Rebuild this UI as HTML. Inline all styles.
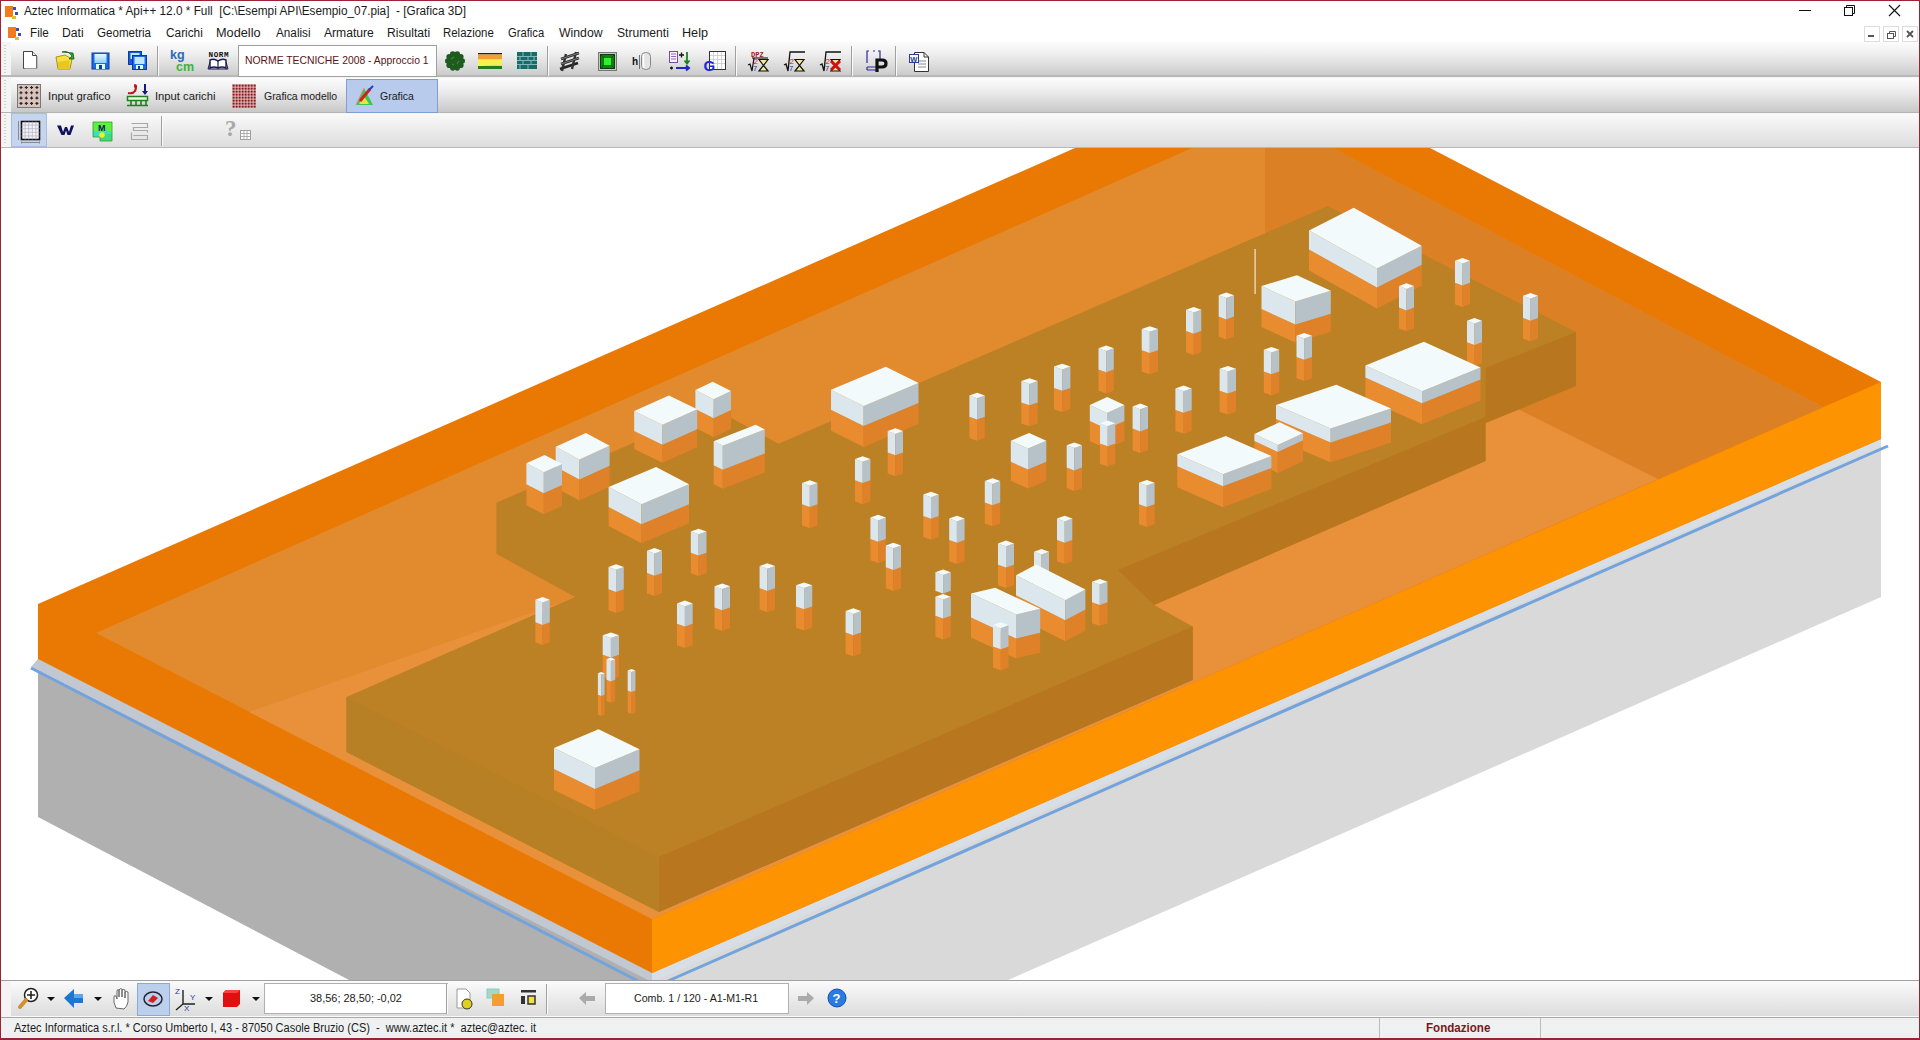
<!DOCTYPE html>
<html><head><meta charset="utf-8">
<style>
html,body{margin:0;padding:0;}
body{width:1920px;height:1040px;overflow:hidden;position:relative;background:#fff;font-family:"Liberation Sans", sans-serif;}
.t{position:absolute;font-size:12px;color:#1a1a1a;white-space:nowrap;line-height:14px;}
.ic{position:absolute;overflow:visible;}
.tb{position:absolute;left:0;width:1920px;background:linear-gradient(#fcfcfc 0%,#f0f0f0 30%,#d6d6d6 75%,#c6c6c6 100%);}
.tb3{background:linear-gradient(#fbfbfb 0%,#eeeeee 40%,#dcdcdc 100%) !important;}
.box{position:absolute;background:#fff;border:1px solid #a8a8a8;}
#scene{position:absolute;left:0;top:0;width:1920px;height:1040px;}
</style></head><body>
<svg id="scene" viewBox="0 0 1920 1040">
<polygon points="38.0,659.0 652.0,973.0 652.0,981.0 351.0,981.0 38.0,817.0" fill="#b0b0b0"/>
<polygon points="652.0,973.0 1881.0,439.0 1881.0,597.0 1006.0,981.0 652.0,981.0" fill="#d9d9d9"/>
<polygon points="38.0,659.0 652.0,973.0 652.0,982.0 31.0,667.0" fill="#c2c8d2"/>
<polygon points="652.0,973.0 1881.0,439.0 1881.0,446.0 652.0,982.0" fill="#d8dee6"/>
<polyline points="31.0,668.0 640.0,982.0" stroke="#72a3dc" stroke-width="3" fill="none"/>
<polyline points="652.0,988.0 1888.0,446.0" stroke="#72a3dc" stroke-width="3" fill="none"/>
<polygon points="38.0,604.0 1075.0,148.0 1430.0,148.0 1881.0,382.0 1881.0,439.0 652.0,973.0 38.0,659.0" fill="#ea7903"/>
<polygon points="652.0,919.0 1881.0,382.0 1881.0,439.0 652.0,973.0" fill="#fe9302"/>
<polygon points="96.0,633.0 1192.0,148.0 1333.0,148.0 1823.0,407.0 652.0,919.0" fill="#e28a2e"/>
<polygon points="249.0,712.0 575.0,597.5 1265.0,300.0 1520.0,410.0 1658.0,479.0 652.0,919.0" fill="#e8913a"/>
<polygon points="1265.0,148.0 1333.0,148.0 1823.0,407.0 1658.0,479.0 1520.0,410.0 1265.0,285.0" fill="#dc8026"/>
<polygon points="346.5,697.0 575.0,597.0 496.4,553.8 496.4,502.7 713.0,408.0 778.5,443.8 1328.0,206.0 1576.0,332.0 1576.0,386.0 1485.5,423.0 1485.5,461.0 1154.0,605.0 1192.7,626.4 1192.7,680.0 659.0,912.0 346.5,752.0" fill="#bc8124"/>
<polygon points="346.5,697.0 659.0,857.0 659.0,912.0 346.5,752.0" fill="#b88024"/>
<polygon points="659.0,857.0 1192.7,626.4 1192.7,680.0 659.0,912.0" fill="#b8761f"/>
<polygon points="1576.0,332.0 1576.0,386.0 1485.5,423.0 1485.5,368.0" fill="#b8761f"/>
<polygon points="1485.5,417.0 1485.5,461.0 1154.0,605.0 1118.0,570.0" fill="#b8761f"/>
<rect x="1254.5" y="249" width="1.2" height="45" fill="#f4e6d0"/>
<polygon points="1309.0,249.5 1377.0,287.5 1377.0,308.5 1309.0,270.5" fill="#e98b2f"/>
<polygon points="1377.0,287.5 1421.7,264.7 1421.7,285.7 1377.0,308.5" fill="#df8129"/>
<polygon points="1309.0,230.5 1377.0,268.5 1377.0,287.5 1309.0,249.5" fill="#dce7ed"/>
<polygon points="1377.0,268.5 1421.7,245.7 1421.7,264.7 1377.0,287.5" fill="#b6c2c8"/>
<polygon points="1309.0,230.5 1353.7,207.7 1421.7,245.7 1377.0,268.5" fill="#f3fafc"/>
<polygon points="1455.0,282.8 1462.5,285.6 1462.5,307.0 1455.0,304.2" fill="#e98b2f"/>
<polygon points="1462.5,285.6 1470.0,282.8 1470.0,304.2 1462.5,307.0" fill="#df8129"/>
<polygon points="1455.0,260.7 1462.5,263.5 1462.5,285.6 1455.0,282.8" fill="#dce7ed"/>
<polygon points="1462.5,263.5 1470.0,260.7 1470.0,282.8 1462.5,285.6" fill="#b6c2c8"/>
<polygon points="1455.0,260.7 1462.5,257.9 1470.0,260.7 1462.5,263.5" fill="#f3fafc"/>
<polygon points="1261.5,309.0 1295.4,324.5 1295.4,342.5 1261.5,327.0" fill="#e98b2f"/>
<polygon points="1295.4,324.5 1330.8,313.8 1330.8,331.8 1295.4,342.5" fill="#df8129"/>
<polygon points="1261.5,286.0 1295.4,301.5 1295.4,324.5 1261.5,309.0" fill="#dce7ed"/>
<polygon points="1295.4,301.5 1330.8,290.8 1330.8,313.8 1295.4,324.5" fill="#b6c2c8"/>
<polygon points="1261.5,286.0 1296.9,275.3 1330.8,290.8 1295.4,301.5" fill="#f3fafc"/>
<polygon points="1399.0,307.6 1406.5,310.4 1406.5,331.2 1399.0,328.4" fill="#e98b2f"/>
<polygon points="1406.5,310.4 1414.0,307.6 1414.0,328.4 1406.5,331.2" fill="#df8129"/>
<polygon points="1399.0,286.1 1406.5,288.9 1406.5,310.4 1399.0,307.6" fill="#dce7ed"/>
<polygon points="1406.5,288.9 1414.0,286.1 1414.0,307.6 1406.5,310.4" fill="#b6c2c8"/>
<polygon points="1399.0,286.1 1406.5,283.3 1414.0,286.1 1406.5,288.9" fill="#f3fafc"/>
<polygon points="1218.7,316.6 1226.3,319.4 1226.3,339.6 1218.7,336.8" fill="#e98b2f"/>
<polygon points="1226.3,319.4 1234.0,316.6 1234.0,336.8 1226.3,339.6" fill="#df8129"/>
<polygon points="1218.7,295.3 1226.3,298.1 1226.3,319.4 1218.7,316.6" fill="#dce7ed"/>
<polygon points="1226.3,298.1 1234.0,295.3 1234.0,316.6 1226.3,319.4" fill="#b6c2c8"/>
<polygon points="1218.7,295.3 1226.3,292.5 1234.0,295.3 1226.3,298.1" fill="#f3fafc"/>
<polygon points="1523.0,318.0 1530.5,320.8 1530.5,341.5 1523.0,338.7" fill="#e98b2f"/>
<polygon points="1530.5,320.8 1538.0,318.0 1538.0,338.7 1530.5,341.5" fill="#df8129"/>
<polygon points="1523.0,295.8 1530.5,298.6 1530.5,320.8 1523.0,318.0" fill="#dce7ed"/>
<polygon points="1530.5,298.6 1538.0,295.8 1538.0,318.0 1530.5,320.8" fill="#b6c2c8"/>
<polygon points="1523.0,295.8 1530.5,293.0 1538.0,295.8 1530.5,298.6" fill="#f3fafc"/>
<polygon points="1186.0,331.0 1193.7,333.8 1193.7,355.0 1186.0,352.2" fill="#e98b2f"/>
<polygon points="1193.7,333.8 1201.3,331.0 1201.3,352.2 1193.7,355.0" fill="#df8129"/>
<polygon points="1186.0,309.8 1193.7,312.6 1193.7,333.8 1186.0,331.0" fill="#dce7ed"/>
<polygon points="1193.7,312.6 1201.3,309.8 1201.3,331.0 1193.7,333.8" fill="#b6c2c8"/>
<polygon points="1186.0,309.8 1193.7,307.0 1201.3,309.8 1193.7,312.6" fill="#f3fafc"/>
<polygon points="1467.0,342.2 1474.5,345.0 1474.5,366.0 1467.0,363.2" fill="#e98b2f"/>
<polygon points="1474.5,345.0 1482.0,342.2 1482.0,363.2 1474.5,366.0" fill="#df8129"/>
<polygon points="1467.0,320.7 1474.5,323.5 1474.5,345.0 1467.0,342.2" fill="#dce7ed"/>
<polygon points="1474.5,323.5 1482.0,320.7 1482.0,342.2 1474.5,345.0" fill="#b6c2c8"/>
<polygon points="1467.0,320.7 1474.5,317.9 1482.0,320.7 1474.5,323.5" fill="#f3fafc"/>
<polygon points="1141.7,350.2 1149.8,353.0 1149.8,374.2 1141.7,371.4" fill="#e98b2f"/>
<polygon points="1149.8,353.0 1158.0,350.2 1158.0,371.4 1149.8,374.2" fill="#df8129"/>
<polygon points="1141.7,329.0 1149.8,331.8 1149.8,353.0 1141.7,350.2" fill="#dce7ed"/>
<polygon points="1149.8,331.8 1158.0,329.0 1158.0,350.2 1149.8,353.0" fill="#b6c2c8"/>
<polygon points="1141.7,329.0 1149.8,326.2 1158.0,329.0 1149.8,331.8" fill="#f3fafc"/>
<polygon points="1296.5,357.0 1304.2,359.8 1304.2,381.0 1296.5,378.2" fill="#e98b2f"/>
<polygon points="1304.2,359.8 1312.0,357.0 1312.0,378.2 1304.2,381.0" fill="#df8129"/>
<polygon points="1296.5,335.8 1304.2,338.6 1304.2,359.8 1296.5,357.0" fill="#dce7ed"/>
<polygon points="1304.2,338.6 1312.0,335.8 1312.0,357.0 1304.2,359.8" fill="#b6c2c8"/>
<polygon points="1296.5,335.8 1304.2,333.0 1312.0,335.8 1304.2,338.6" fill="#f3fafc"/>
<polygon points="1365.4,377.6 1422.0,403.2 1422.0,424.2 1365.4,398.6" fill="#e98b2f"/>
<polygon points="1422.0,403.2 1480.5,379.4 1480.5,400.4 1422.0,424.2" fill="#df8129"/>
<polygon points="1365.4,365.6 1422.0,391.2 1422.0,403.2 1365.4,377.6" fill="#dce7ed"/>
<polygon points="1422.0,391.2 1480.5,367.4 1480.5,379.4 1422.0,403.2" fill="#b6c2c8"/>
<polygon points="1365.4,365.6 1423.9,341.8 1480.5,367.4 1422.0,391.2" fill="#f3fafc"/>
<polygon points="1098.5,369.5 1106.2,372.3 1106.2,393.5 1098.5,390.7" fill="#e98b2f"/>
<polygon points="1106.2,372.3 1113.8,369.5 1113.8,390.7 1106.2,393.5" fill="#df8129"/>
<polygon points="1098.5,348.2 1106.2,351.0 1106.2,372.3 1098.5,369.5" fill="#dce7ed"/>
<polygon points="1106.2,351.0 1113.8,348.2 1113.8,369.5 1106.2,372.3" fill="#b6c2c8"/>
<polygon points="1098.5,348.2 1106.2,345.4 1113.8,348.2 1106.2,351.0" fill="#f3fafc"/>
<polygon points="1263.8,371.4 1271.5,374.2 1271.5,395.4 1263.8,392.6" fill="#e98b2f"/>
<polygon points="1271.5,374.2 1279.2,371.4 1279.2,392.6 1271.5,395.4" fill="#df8129"/>
<polygon points="1263.8,349.8 1271.5,352.6 1271.5,374.2 1263.8,371.4" fill="#dce7ed"/>
<polygon points="1271.5,352.6 1279.2,349.8 1279.2,371.4 1271.5,374.2" fill="#b6c2c8"/>
<polygon points="1263.8,349.8 1271.5,347.0 1279.2,349.8 1271.5,352.6" fill="#f3fafc"/>
<polygon points="1054.0,388.0 1062.2,390.8 1062.2,412.0 1054.0,409.2" fill="#e98b2f"/>
<polygon points="1062.2,390.8 1070.4,388.0 1070.4,409.2 1062.2,412.0" fill="#df8129"/>
<polygon points="1054.0,366.6 1062.2,369.4 1062.2,390.8 1054.0,388.0" fill="#dce7ed"/>
<polygon points="1062.2,369.4 1070.4,366.6 1070.4,388.0 1062.2,390.8" fill="#b6c2c8"/>
<polygon points="1054.0,366.6 1062.2,363.8 1070.4,366.6 1062.2,369.4" fill="#f3fafc"/>
<polygon points="1219.6,390.7 1227.8,393.5 1227.8,414.6 1219.6,411.8" fill="#e98b2f"/>
<polygon points="1227.8,393.5 1236.0,390.7 1236.0,411.8 1227.8,414.6" fill="#df8129"/>
<polygon points="1219.6,368.8 1227.8,371.6 1227.8,393.5 1219.6,390.7" fill="#dce7ed"/>
<polygon points="1227.8,371.6 1236.0,368.8 1236.0,390.7 1227.8,393.5" fill="#b6c2c8"/>
<polygon points="1219.6,368.8 1227.8,366.0 1236.0,368.8 1227.8,371.6" fill="#f3fafc"/>
<polygon points="831.0,409.8 863.7,426.0 863.7,447.0 831.0,430.8" fill="#e98b2f"/>
<polygon points="863.7,426.0 918.5,403.0 918.5,424.0 863.7,447.0" fill="#df8129"/>
<polygon points="831.0,389.8 863.7,406.0 863.7,426.0 831.0,409.8" fill="#dce7ed"/>
<polygon points="863.7,406.0 918.5,383.0 918.5,403.0 863.7,426.0" fill="#b6c2c8"/>
<polygon points="831.0,389.8 885.8,366.8 918.5,383.0 863.7,406.0" fill="#f3fafc"/>
<polygon points="1021.3,402.4 1029.5,405.2 1029.5,426.3 1021.3,423.5" fill="#e98b2f"/>
<polygon points="1029.5,405.2 1037.7,402.4 1037.7,423.5 1029.5,426.3" fill="#df8129"/>
<polygon points="1021.3,381.1 1029.5,383.9 1029.5,405.2 1021.3,402.4" fill="#dce7ed"/>
<polygon points="1029.5,383.9 1037.7,381.1 1037.7,402.4 1029.5,405.2" fill="#b6c2c8"/>
<polygon points="1021.3,381.1 1029.5,378.3 1037.7,381.1 1029.5,383.9" fill="#f3fafc"/>
<polygon points="695.4,409.0 713.7,418.2 713.7,437.2 695.4,428.0" fill="#e98b2f"/>
<polygon points="713.7,418.2 731.0,410.0 731.0,429.0 713.7,437.2" fill="#df8129"/>
<polygon points="695.4,390.0 713.7,399.2 713.7,418.2 695.4,409.0" fill="#dce7ed"/>
<polygon points="713.7,399.2 731.0,391.0 731.0,410.0 713.7,418.2" fill="#b6c2c8"/>
<polygon points="695.4,390.0 712.7,381.8 731.0,391.0 713.7,399.2" fill="#f3fafc"/>
<polygon points="1276.0,418.9 1330.7,442.6 1330.7,462.6 1276.0,438.9" fill="#e98b2f"/>
<polygon points="1330.7,442.6 1391.0,422.5 1391.0,442.5 1330.7,462.6" fill="#df8129"/>
<polygon points="1276.0,404.9 1330.7,428.6 1330.7,442.6 1276.0,418.9" fill="#dce7ed"/>
<polygon points="1330.7,428.6 1391.0,408.5 1391.0,422.5 1330.7,442.6" fill="#b6c2c8"/>
<polygon points="1276.0,404.9 1336.3,384.8 1391.0,408.5 1330.7,428.6" fill="#f3fafc"/>
<polygon points="1175.4,409.9 1183.6,412.7 1183.6,433.8 1175.4,431.0" fill="#e98b2f"/>
<polygon points="1183.6,412.7 1191.7,409.9 1191.7,431.0 1183.6,433.8" fill="#df8129"/>
<polygon points="1175.4,388.4 1183.6,391.2 1183.6,412.7 1175.4,409.9" fill="#dce7ed"/>
<polygon points="1183.6,391.2 1191.7,388.4 1191.7,409.9 1183.6,412.7" fill="#b6c2c8"/>
<polygon points="1175.4,388.4 1183.6,385.6 1191.7,388.4 1183.6,391.2" fill="#f3fafc"/>
<polygon points="969.4,416.8 977.1,419.6 977.1,440.8 969.4,438.0" fill="#e98b2f"/>
<polygon points="977.1,419.6 984.8,416.8 984.8,438.0 977.1,440.8" fill="#df8129"/>
<polygon points="969.4,395.5 977.1,398.3 977.1,419.6 969.4,416.8" fill="#dce7ed"/>
<polygon points="977.1,398.3 984.8,395.5 984.8,416.8 977.1,419.6" fill="#b6c2c8"/>
<polygon points="969.4,395.5 977.1,392.7 984.8,395.5 977.1,398.3" fill="#f3fafc"/>
<polygon points="634.2,431.0 662.5,444.8 662.5,462.8 634.2,449.0" fill="#e98b2f"/>
<polygon points="662.5,444.8 697.2,429.3 697.2,447.3 662.5,462.8" fill="#df8129"/>
<polygon points="634.2,411.0 662.5,424.8 662.5,444.8 634.2,431.0" fill="#dce7ed"/>
<polygon points="662.5,424.8 697.2,409.3 697.2,429.3 662.5,444.8" fill="#b6c2c8"/>
<polygon points="634.2,411.0 668.9,395.5 697.2,409.3 662.5,424.8" fill="#f3fafc"/>
<polygon points="1089.8,421.0 1107.0,429.0 1107.0,449.0 1089.8,441.0" fill="#e98b2f"/>
<polygon points="1107.0,429.0 1124.4,421.0 1124.4,441.0 1107.0,449.0" fill="#df8129"/>
<polygon points="1089.8,405.0 1107.0,413.0 1107.0,429.0 1089.8,421.0" fill="#dce7ed"/>
<polygon points="1107.0,413.0 1124.4,405.0 1124.4,421.0 1107.0,429.0" fill="#b6c2c8"/>
<polygon points="1089.8,405.0 1107.2,397.0 1124.4,405.0 1107.0,413.0" fill="#f3fafc"/>
<polygon points="1132.6,428.6 1140.3,431.4 1140.3,453.0 1132.6,450.2" fill="#e98b2f"/>
<polygon points="1140.3,431.4 1148.0,428.6 1148.0,450.2 1140.3,453.0" fill="#df8129"/>
<polygon points="1132.6,406.4 1140.3,409.2 1140.3,431.4 1132.6,428.6" fill="#dce7ed"/>
<polygon points="1140.3,409.2 1148.0,406.4 1148.0,428.6 1140.3,431.4" fill="#b6c2c8"/>
<polygon points="1132.6,406.4 1140.3,403.6 1148.0,406.4 1140.3,409.2" fill="#f3fafc"/>
<polygon points="1100.0,443.5 1107.7,446.3 1107.7,466.5 1100.0,463.7" fill="#e98b2f"/>
<polygon points="1107.7,446.3 1115.3,443.5 1115.3,463.7 1107.7,466.5" fill="#df8129"/>
<polygon points="1100.0,423.2 1107.7,426.0 1107.7,446.3 1100.0,443.5" fill="#dce7ed"/>
<polygon points="1107.7,426.0 1115.3,423.2 1115.3,443.5 1107.7,446.3" fill="#b6c2c8"/>
<polygon points="1100.0,423.2 1107.7,420.4 1115.3,423.2 1107.7,426.0" fill="#f3fafc"/>
<polygon points="1254.4,441.0 1277.8,452.0 1277.8,473.0 1254.4,462.0" fill="#e98b2f"/>
<polygon points="1277.8,452.0 1303.0,440.2 1303.0,461.2 1277.8,473.0" fill="#df8129"/>
<polygon points="1254.4,434.0 1277.8,445.0 1277.8,452.0 1254.4,441.0" fill="#dce7ed"/>
<polygon points="1277.8,445.0 1303.0,433.2 1303.0,440.2 1277.8,452.0" fill="#b6c2c8"/>
<polygon points="1254.4,434.0 1279.6,422.2 1303.0,433.2 1277.8,445.0" fill="#f3fafc"/>
<polygon points="713.7,465.2 722.8,469.8 722.8,488.8 713.7,484.2" fill="#e98b2f"/>
<polygon points="722.8,469.8 764.8,453.4 764.8,472.4 722.8,488.8" fill="#df8129"/>
<polygon points="713.7,441.2 722.8,445.8 722.8,469.8 713.7,465.2" fill="#dce7ed"/>
<polygon points="722.8,445.8 764.8,429.4 764.8,453.4 722.8,469.8" fill="#b6c2c8"/>
<polygon points="713.7,441.2 755.7,424.8 764.8,429.4 722.8,445.8" fill="#f3fafc"/>
<polygon points="887.7,452.4 895.4,455.2 895.4,476.3 887.7,473.5" fill="#e98b2f"/>
<polygon points="895.4,455.2 903.0,452.4 903.0,473.5 895.4,476.3" fill="#df8129"/>
<polygon points="887.7,431.1 895.4,433.9 895.4,455.2 887.7,452.4" fill="#dce7ed"/>
<polygon points="895.4,433.9 903.0,431.1 903.0,452.4 895.4,455.2" fill="#b6c2c8"/>
<polygon points="887.7,431.1 895.4,428.3 903.0,431.1 895.4,433.9" fill="#f3fafc"/>
<polygon points="555.7,466.7 579.4,479.5 579.4,500.5 555.7,487.7" fill="#e98b2f"/>
<polygon points="579.4,479.5 609.6,465.8 609.6,486.8 579.4,500.5" fill="#df8129"/>
<polygon points="555.7,446.7 579.4,459.5 579.4,479.5 555.7,466.7" fill="#dce7ed"/>
<polygon points="579.4,459.5 609.6,445.8 609.6,465.8 579.4,479.5" fill="#b6c2c8"/>
<polygon points="555.7,446.7 585.9,433.0 609.6,445.8 579.4,459.5" fill="#f3fafc"/>
<polygon points="1010.8,461.8 1028.0,469.5 1028.0,488.5 1010.8,480.8" fill="#e98b2f"/>
<polygon points="1028.0,469.5 1046.3,461.8 1046.3,480.8 1028.0,488.5" fill="#df8129"/>
<polygon points="1010.8,440.8 1028.0,448.5 1028.0,469.5 1010.8,461.8" fill="#dce7ed"/>
<polygon points="1028.0,448.5 1046.3,440.8 1046.3,461.8 1028.0,469.5" fill="#b6c2c8"/>
<polygon points="1010.8,440.8 1029.1,433.1 1046.3,440.8 1028.0,448.5" fill="#f3fafc"/>
<polygon points="1177.3,466.2 1223.0,486.3 1223.0,507.3 1177.3,487.2" fill="#e98b2f"/>
<polygon points="1223.0,486.3 1271.4,468.0 1271.4,489.0 1223.0,507.3" fill="#df8129"/>
<polygon points="1177.3,454.2 1223.0,474.3 1223.0,486.3 1177.3,466.2" fill="#dce7ed"/>
<polygon points="1223.0,474.3 1271.4,456.0 1271.4,468.0 1223.0,486.3" fill="#b6c2c8"/>
<polygon points="1177.3,454.2 1225.7,435.9 1271.4,456.0 1223.0,474.3" fill="#f3fafc"/>
<polygon points="1066.7,467.6 1074.3,470.4 1074.3,491.0 1066.7,488.2" fill="#e98b2f"/>
<polygon points="1074.3,470.4 1082.0,467.6 1082.0,488.2 1074.3,491.0" fill="#df8129"/>
<polygon points="1066.7,445.3 1074.3,448.1 1074.3,470.4 1066.7,467.6" fill="#dce7ed"/>
<polygon points="1074.3,448.1 1082.0,445.3 1082.0,467.6 1074.3,470.4" fill="#b6c2c8"/>
<polygon points="1066.7,445.3 1074.3,442.5 1082.0,445.3 1074.3,448.1" fill="#f3fafc"/>
<polygon points="526.4,484.2 543.8,493.3 543.8,514.3 526.4,505.2" fill="#e98b2f"/>
<polygon points="543.8,493.3 562.0,485.0 562.0,506.0 543.8,514.3" fill="#df8129"/>
<polygon points="526.4,463.2 543.8,472.3 543.8,493.3 526.4,484.2" fill="#dce7ed"/>
<polygon points="543.8,472.3 562.0,464.0 562.0,485.0 543.8,493.3" fill="#b6c2c8"/>
<polygon points="526.4,463.2 544.6,454.9 562.0,464.0 543.8,472.3" fill="#f3fafc"/>
<polygon points="855.0,480.2 862.7,483.0 862.7,504.2 855.0,501.4" fill="#e98b2f"/>
<polygon points="862.7,483.0 870.4,480.2 870.4,501.4 862.7,504.2" fill="#df8129"/>
<polygon points="855.0,459.0 862.7,461.8 862.7,483.0 855.0,480.2" fill="#dce7ed"/>
<polygon points="862.7,461.8 870.4,459.0 870.4,480.2 862.7,483.0" fill="#b6c2c8"/>
<polygon points="855.0,459.0 862.7,456.2 870.4,459.0 862.7,461.8" fill="#f3fafc"/>
<polygon points="608.6,507.0 641.5,524.3 641.5,543.3 608.6,526.0" fill="#e98b2f"/>
<polygon points="641.5,524.3 689.0,504.2 689.0,523.2 641.5,543.3" fill="#df8129"/>
<polygon points="608.6,487.0 641.5,504.3 641.5,524.3 608.6,507.0" fill="#dce7ed"/>
<polygon points="641.5,504.3 689.0,484.2 689.0,504.2 641.5,524.3" fill="#b6c2c8"/>
<polygon points="608.6,487.0 656.1,466.9 689.0,484.2 641.5,504.3" fill="#f3fafc"/>
<polygon points="984.8,502.4 992.5,505.2 992.5,526.3 984.8,523.5" fill="#e98b2f"/>
<polygon points="992.5,505.2 1000.2,502.4 1000.2,523.5 992.5,526.3" fill="#df8129"/>
<polygon points="984.8,481.1 992.5,483.9 992.5,505.2 984.8,502.4" fill="#dce7ed"/>
<polygon points="992.5,483.9 1000.2,481.1 1000.2,502.4 992.5,505.2" fill="#b6c2c8"/>
<polygon points="984.8,481.1 992.5,478.3 1000.2,481.1 992.5,483.9" fill="#f3fafc"/>
<polygon points="1139.0,504.2 1146.8,507.0 1146.8,527.0 1139.0,524.2" fill="#e98b2f"/>
<polygon points="1146.8,507.0 1154.6,504.2 1154.6,524.2 1146.8,527.0" fill="#df8129"/>
<polygon points="1139.0,482.8 1146.8,485.6 1146.8,507.0 1139.0,504.2" fill="#dce7ed"/>
<polygon points="1146.8,485.6 1154.6,482.8 1154.6,504.2 1146.8,507.0" fill="#b6c2c8"/>
<polygon points="1139.0,482.8 1146.8,480.0 1154.6,482.8 1146.8,485.6" fill="#f3fafc"/>
<polygon points="802.0,504.2 809.8,507.0 809.8,528.3 802.0,525.5" fill="#e98b2f"/>
<polygon points="809.8,507.0 817.5,504.2 817.5,525.5 809.8,528.3" fill="#df8129"/>
<polygon points="802.0,483.0 809.8,485.8 809.8,507.0 802.0,504.2" fill="#dce7ed"/>
<polygon points="809.8,485.8 817.5,483.0 817.5,504.2 809.8,507.0" fill="#b6c2c8"/>
<polygon points="802.0,483.0 809.8,480.2 817.5,483.0 809.8,485.8" fill="#f3fafc"/>
<polygon points="923.3,515.9 931.0,518.7 931.0,539.8 923.3,537.0" fill="#e98b2f"/>
<polygon points="931.0,518.7 938.7,515.9 938.7,537.0 931.0,539.8" fill="#df8129"/>
<polygon points="923.3,494.5 931.0,497.3 931.0,518.7 923.3,515.9" fill="#dce7ed"/>
<polygon points="931.0,497.3 938.7,494.5 938.7,515.9 931.0,518.7" fill="#b6c2c8"/>
<polygon points="923.3,494.5 931.0,491.7 938.7,494.5 931.0,497.3" fill="#f3fafc"/>
<polygon points="870.4,538.9 878.1,541.7 878.1,563.0 870.4,560.2" fill="#e98b2f"/>
<polygon points="878.1,541.7 885.8,538.9 885.8,560.2 878.1,563.0" fill="#df8129"/>
<polygon points="870.4,517.6 878.1,520.4 878.1,541.7 870.4,538.9" fill="#dce7ed"/>
<polygon points="878.1,520.4 885.8,517.6 885.8,538.9 878.1,541.7" fill="#b6c2c8"/>
<polygon points="870.4,517.6 878.1,514.8 885.8,517.6 878.1,520.4" fill="#f3fafc"/>
<polygon points="949.2,539.9 956.9,542.7 956.9,564.0 949.2,561.2" fill="#e98b2f"/>
<polygon points="956.9,542.7 964.6,539.9 964.6,561.2 956.9,564.0" fill="#df8129"/>
<polygon points="949.2,518.6 956.9,521.4 956.9,542.7 949.2,539.9" fill="#dce7ed"/>
<polygon points="956.9,521.4 964.6,518.6 964.6,539.9 956.9,542.7" fill="#b6c2c8"/>
<polygon points="949.2,518.6 956.9,515.8 964.6,518.6 956.9,521.4" fill="#f3fafc"/>
<polygon points="1057.0,539.9 1064.7,542.7 1064.7,564.0 1057.0,561.2" fill="#e98b2f"/>
<polygon points="1064.7,542.7 1072.3,539.9 1072.3,561.2 1064.7,564.0" fill="#df8129"/>
<polygon points="1057.0,518.6 1064.7,521.4 1064.7,542.7 1057.0,539.9" fill="#dce7ed"/>
<polygon points="1064.7,521.4 1072.3,518.6 1072.3,539.9 1064.7,542.7" fill="#b6c2c8"/>
<polygon points="1057.0,518.6 1064.7,515.8 1072.3,518.6 1064.7,521.4" fill="#f3fafc"/>
<polygon points="690.8,552.8 698.6,555.6 698.6,576.0 690.8,573.2" fill="#e98b2f"/>
<polygon points="698.6,555.6 706.5,552.8 706.5,573.2 698.6,576.0" fill="#df8129"/>
<polygon points="690.8,531.5 698.6,534.3 698.6,555.6 690.8,552.8" fill="#dce7ed"/>
<polygon points="698.6,534.3 706.5,531.5 706.5,552.8 698.6,555.6" fill="#b6c2c8"/>
<polygon points="690.8,531.5 698.6,528.7 706.5,531.5 698.6,534.3" fill="#f3fafc"/>
<polygon points="998.0,564.7 1006.0,567.5 1006.0,588.0 998.0,585.2" fill="#e98b2f"/>
<polygon points="1006.0,567.5 1014.0,564.7 1014.0,585.2 1006.0,588.0" fill="#df8129"/>
<polygon points="998.0,543.4 1006.0,546.2 1006.0,567.5 998.0,564.7" fill="#dce7ed"/>
<polygon points="1006.0,546.2 1014.0,543.4 1014.0,564.7 1006.0,567.5" fill="#b6c2c8"/>
<polygon points="998.0,543.4 1006.0,540.6 1014.0,543.4 1006.0,546.2" fill="#f3fafc"/>
<polygon points="885.8,567.2 893.4,570.0 893.4,591.0 885.8,588.2" fill="#e98b2f"/>
<polygon points="893.4,570.0 901.0,567.2 901.0,588.2 893.4,591.0" fill="#df8129"/>
<polygon points="885.8,545.5 893.4,548.3 893.4,570.0 885.8,567.2" fill="#dce7ed"/>
<polygon points="893.4,548.3 901.0,545.5 901.0,567.2 893.4,570.0" fill="#b6c2c8"/>
<polygon points="885.8,545.5 893.4,542.7 901.0,545.5 893.4,548.3" fill="#f3fafc"/>
<polygon points="647.0,573.0 654.5,575.8 654.5,596.0 647.0,593.2" fill="#e98b2f"/>
<polygon points="654.5,575.8 662.0,573.0 662.0,593.2 654.5,596.0" fill="#df8129"/>
<polygon points="647.0,550.8 654.5,553.6 654.5,575.8 647.0,573.0" fill="#dce7ed"/>
<polygon points="654.5,553.6 662.0,550.8 662.0,573.0 654.5,575.8" fill="#b6c2c8"/>
<polygon points="647.0,550.8 654.5,548.0 662.0,550.8 654.5,553.6" fill="#f3fafc"/>
<polygon points="1034.0,572.2 1041.5,575.0 1041.5,590.0 1034.0,587.2" fill="#e98b2f"/>
<polygon points="1041.5,575.0 1049.0,572.2 1049.0,587.2 1041.5,590.0" fill="#df8129"/>
<polygon points="1034.0,551.8 1041.5,554.6 1041.5,575.0 1034.0,572.2" fill="#dce7ed"/>
<polygon points="1041.5,554.6 1049.0,551.8 1049.0,572.2 1041.5,575.0" fill="#b6c2c8"/>
<polygon points="1034.0,551.8 1041.5,549.0 1049.0,551.8 1041.5,554.6" fill="#f3fafc"/>
<polygon points="759.6,588.2 767.3,591.0 767.3,612.2 759.6,609.4" fill="#e98b2f"/>
<polygon points="767.3,591.0 775.0,588.2 775.0,609.4 767.3,612.2" fill="#df8129"/>
<polygon points="759.6,566.0 767.3,568.8 767.3,591.0 759.6,588.2" fill="#dce7ed"/>
<polygon points="767.3,568.8 775.0,566.0 775.0,588.2 767.3,591.0" fill="#b6c2c8"/>
<polygon points="759.6,566.0 767.3,563.2 775.0,566.0 767.3,568.8" fill="#f3fafc"/>
<polygon points="608.5,589.2 616.1,592.0 616.1,613.0 608.5,610.2" fill="#e98b2f"/>
<polygon points="616.1,592.0 623.8,589.2 623.8,610.2 616.1,613.0" fill="#df8129"/>
<polygon points="608.5,567.0 616.1,569.8 616.1,592.0 608.5,589.2" fill="#dce7ed"/>
<polygon points="616.1,569.8 623.8,567.0 623.8,589.2 616.1,592.0" fill="#b6c2c8"/>
<polygon points="608.5,567.0 616.1,564.2 623.8,567.0 616.1,569.8" fill="#f3fafc"/>
<polygon points="1016.0,595.2 1065.2,620.2 1065.2,641.2 1016.0,616.2" fill="#e98b2f"/>
<polygon points="1065.2,620.2 1085.4,609.6 1085.4,630.6 1065.2,641.2" fill="#df8129"/>
<polygon points="1016.0,575.2 1065.2,600.2 1065.2,620.2 1016.0,595.2" fill="#dce7ed"/>
<polygon points="1065.2,600.2 1085.4,589.6 1085.4,609.6 1065.2,620.2" fill="#b6c2c8"/>
<polygon points="1016.0,575.2 1036.2,564.6 1085.4,589.6 1065.2,600.2" fill="#f3fafc"/>
<polygon points="935.4,590.7 943.1,593.5 943.1,594.0 935.4,591.2" fill="#e98b2f"/>
<polygon points="943.1,593.5 950.8,590.7 950.8,591.2 943.1,594.0" fill="#df8129"/>
<polygon points="935.4,572.2 943.1,575.0 943.1,593.5 935.4,590.7" fill="#dce7ed"/>
<polygon points="943.1,575.0 950.8,572.2 950.8,590.7 943.1,593.5" fill="#b6c2c8"/>
<polygon points="935.4,572.2 943.1,569.4 950.8,572.2 943.1,575.0" fill="#f3fafc"/>
<polygon points="1092.0,602.2 1099.8,605.0 1099.8,626.0 1092.0,623.2" fill="#e98b2f"/>
<polygon points="1099.8,605.0 1107.5,602.2 1107.5,623.2 1099.8,626.0" fill="#df8129"/>
<polygon points="1092.0,581.8 1099.8,584.6 1099.8,605.0 1092.0,602.2" fill="#dce7ed"/>
<polygon points="1099.8,584.6 1107.5,581.8 1107.5,602.2 1099.8,605.0" fill="#b6c2c8"/>
<polygon points="1092.0,581.8 1099.8,579.0 1107.5,581.8 1099.8,584.6" fill="#f3fafc"/>
<polygon points="796.0,606.5 804.1,609.3 804.1,630.5 796.0,627.7" fill="#e98b2f"/>
<polygon points="804.1,609.3 812.2,606.5 812.2,627.7 804.1,630.5" fill="#df8129"/>
<polygon points="796.0,585.2 804.1,588.0 804.1,609.3 796.0,606.5" fill="#dce7ed"/>
<polygon points="804.1,588.0 812.2,585.2 812.2,606.5 804.1,609.3" fill="#b6c2c8"/>
<polygon points="796.0,585.2 804.1,582.4 812.2,585.2 804.1,588.0" fill="#f3fafc"/>
<polygon points="714.5,607.5 722.2,610.3 722.2,631.0 714.5,628.2" fill="#e98b2f"/>
<polygon points="722.2,610.3 730.0,607.5 730.0,628.2 722.2,631.0" fill="#df8129"/>
<polygon points="714.5,586.2 722.2,589.0 722.2,610.3 714.5,607.5" fill="#dce7ed"/>
<polygon points="722.2,589.0 730.0,586.2 730.0,607.5 722.2,610.3" fill="#b6c2c8"/>
<polygon points="714.5,586.2 722.2,583.4 730.0,586.2 722.2,589.0" fill="#f3fafc"/>
<polygon points="971.0,617.5 1016.0,638.6 1016.0,658.6 971.0,637.5" fill="#e98b2f"/>
<polygon points="1016.0,638.6 1040.2,632.8 1040.2,652.8 1016.0,658.6" fill="#df8129"/>
<polygon points="971.0,593.5 1016.0,614.6 1016.0,638.6 971.0,617.5" fill="#dce7ed"/>
<polygon points="1016.0,614.6 1040.2,608.8 1040.2,632.8 1016.0,638.6" fill="#b6c2c8"/>
<polygon points="971.0,593.5 995.2,587.7 1040.2,608.8 1016.0,614.6" fill="#f3fafc"/>
<polygon points="935.4,615.7 943.1,618.5 943.1,639.6 935.4,636.8" fill="#e98b2f"/>
<polygon points="943.1,618.5 950.8,615.7 950.8,636.8 943.1,639.6" fill="#df8129"/>
<polygon points="935.4,596.8 943.1,599.6 943.1,618.5 935.4,615.7" fill="#dce7ed"/>
<polygon points="943.1,599.6 950.8,596.8 950.8,615.7 943.1,618.5" fill="#b6c2c8"/>
<polygon points="935.4,596.8 943.1,594.0 950.8,596.8 943.1,599.6" fill="#f3fafc"/>
<polygon points="535.4,622.2 542.6,625.0 542.6,645.0 535.4,642.2" fill="#e98b2f"/>
<polygon points="542.6,625.0 549.8,622.2 549.8,642.2 542.6,645.0" fill="#df8129"/>
<polygon points="535.4,599.8 542.6,602.6 542.6,625.0 535.4,622.2" fill="#dce7ed"/>
<polygon points="542.6,602.6 549.8,599.8 549.8,622.2 542.6,625.0" fill="#b6c2c8"/>
<polygon points="535.4,599.8 542.6,597.0 549.8,599.8 542.6,602.6" fill="#f3fafc"/>
<polygon points="677.0,623.8 684.9,626.6 684.9,648.0 677.0,645.2" fill="#e98b2f"/>
<polygon points="684.9,626.6 692.7,623.8 692.7,645.2 684.9,648.0" fill="#df8129"/>
<polygon points="677.0,603.4 684.9,606.2 684.9,626.6 677.0,623.8" fill="#dce7ed"/>
<polygon points="684.9,606.2 692.7,603.4 692.7,623.8 684.9,626.6" fill="#b6c2c8"/>
<polygon points="677.0,603.4 684.9,600.6 692.7,603.4 684.9,606.2" fill="#f3fafc"/>
<polygon points="845.6,632.4 853.3,635.2 853.3,656.3 845.6,653.5" fill="#e98b2f"/>
<polygon points="853.3,635.2 861.0,632.4 861.0,653.5 853.3,656.3" fill="#df8129"/>
<polygon points="845.6,611.1 853.3,613.9 853.3,635.2 845.6,632.4" fill="#dce7ed"/>
<polygon points="853.3,613.9 861.0,611.1 861.0,632.4 853.3,635.2" fill="#b6c2c8"/>
<polygon points="845.6,611.1 853.3,608.3 861.0,611.1 853.3,613.9" fill="#f3fafc"/>
<polygon points="993.0,646.4 1000.8,649.2 1000.8,670.4 993.0,667.6" fill="#e98b2f"/>
<polygon points="1000.8,649.2 1008.5,646.4 1008.5,667.6 1000.8,670.4" fill="#df8129"/>
<polygon points="993.0,625.1 1000.8,627.9 1000.8,649.2 993.0,646.4" fill="#dce7ed"/>
<polygon points="1000.8,627.9 1008.5,625.1 1008.5,646.4 1000.8,649.2" fill="#b6c2c8"/>
<polygon points="993.0,625.1 1000.8,622.3 1008.5,625.1 1000.8,627.9" fill="#f3fafc"/>
<polygon points="602.7,654.7 610.9,657.5 610.9,679.6 602.7,676.8" fill="#e98b2f"/>
<polygon points="610.9,657.5 619.0,654.7 619.0,676.8 610.9,679.6" fill="#df8129"/>
<polygon points="602.7,635.3 610.9,638.1 610.9,657.5 602.7,654.7" fill="#dce7ed"/>
<polygon points="610.9,638.1 619.0,635.3 619.0,654.7 610.9,657.5" fill="#b6c2c8"/>
<polygon points="602.7,635.3 610.9,632.5 619.0,635.3 610.9,638.1" fill="#f3fafc"/>
<polygon points="606.5,679.8 610.9,681.5 610.9,702.7 606.5,701.0" fill="#e98b2f"/>
<polygon points="610.9,681.5 615.2,679.8 615.2,701.0 610.9,702.7" fill="#df8129"/>
<polygon points="606.5,659.2 610.9,661.0 610.9,681.5 606.5,679.8" fill="#dce7ed"/>
<polygon points="610.9,661.0 615.2,659.2 615.2,679.8 610.9,681.5" fill="#b6c2c8"/>
<polygon points="606.5,659.2 610.9,657.5 615.2,659.2 610.9,661.0" fill="#f3fafc"/>
<polygon points="627.7,690.5 631.5,692.0 631.5,714.0 627.7,712.5" fill="#e98b2f"/>
<polygon points="631.5,692.0 635.4,690.5 635.4,712.5 631.5,714.0" fill="#df8129"/>
<polygon points="627.7,670.5 631.5,672.1 631.5,692.0 627.7,690.5" fill="#dce7ed"/>
<polygon points="631.5,672.1 635.4,670.5 635.4,690.5 631.5,692.0" fill="#b6c2c8"/>
<polygon points="627.7,670.5 631.5,669.0 635.4,670.5 631.5,672.1" fill="#f3fafc"/>
<polygon points="597.9,694.7 601.2,696.0 601.2,716.0 597.9,714.7" fill="#e98b2f"/>
<polygon points="601.2,696.0 604.6,694.7 604.6,714.7 601.2,716.0" fill="#df8129"/>
<polygon points="597.9,673.3 601.2,674.7 601.2,696.0 597.9,694.7" fill="#dce7ed"/>
<polygon points="601.2,674.7 604.6,673.3 604.6,694.7 601.2,696.0" fill="#b6c2c8"/>
<polygon points="597.9,673.3 601.2,672.0 604.6,673.3 601.2,674.7" fill="#f3fafc"/>
<polygon points="554.0,769.0 595.0,789.0 595.0,810.0 554.0,790.0" fill="#e98b2f"/>
<polygon points="595.0,789.0 639.5,770.3 639.5,791.3 595.0,810.0" fill="#df8129"/>
<polygon points="554.0,748.0 595.0,768.0 595.0,789.0 554.0,769.0" fill="#dce7ed"/>
<polygon points="595.0,768.0 639.5,749.3 639.5,770.3 595.0,789.0" fill="#b6c2c8"/>
<polygon points="554.0,748.0 598.5,729.3 639.5,749.3 595.0,768.0" fill="#f3fafc"/>
</svg>
<!-- title bar + menu -->
<div style="position:absolute;left:0;top:0;width:1920px;height:43px;background:#fff;"></div>
<div class="t" style="left:23.75px;top:5.44px;font-size:12px;line-height:12px;font-weight:normal;color:#1a1a1a;transform:scaleX(0.9819);transform-origin:0 0;">Aztec Informatica * Api++ 12.0 * Full&nbsp; [C:\Esempi API\Esempio_07.pia]&nbsp; - [Grafica 3D]</div>
<svg class="ic" style="left:5px;top:4px;width:16px;height:16px" viewBox="0 0 16 16"><rect x="0" y="2" width="8" height="11" fill="#f07c1c"/><rect x="8" y="3" width="3" height="3" fill="#3050c0"/><rect x="10" y="8" width="3" height="3" fill="#3050c0"/><rect x="7" y="12" width="4" height="3" fill="#d8c040"/></svg>
<svg class="ic" style="left:8px;top:25px;width:16px;height:16px" viewBox="0 0 16 16"><rect x="0" y="2" width="8" height="11" fill="#f07c1c"/><rect x="8" y="3" width="3" height="3" fill="#3050c0"/><rect x="10" y="8" width="3" height="3" fill="#3050c0"/><rect x="7" y="12" width="4" height="3" fill="#d8c040"/></svg>
<div style="position:absolute;left:1799px;top:10px;width:12px;height:1px;background:#111;"></div>
<svg class="ic" style="left:1843px;top:4px;width:14px;height:14px" viewBox="0 0 14 14"><rect x="1.5" y="3.5" width="8" height="8" fill="none" stroke="#111"/><path d="M3.5 3.5V1.5H11.5V9.5H9.5" fill="none" stroke="#111"/></svg>
<svg class="ic" style="left:1888px;top:4px;width:14px;height:14px" viewBox="0 0 14 14"><path d="M1 1L12 12M12 1L1 12" stroke="#111" stroke-width="1.1"/></svg>
<div class="t" style="left:29.67px;top:26.74px;font-size:12px;line-height:12px;font-weight:normal;color:#1a1a1a;transform:scaleX(0.9732);transform-origin:0 0;">File</div><div class="t" style="left:61.52px;top:26.74px;font-size:12px;line-height:12px;font-weight:normal;color:#1a1a1a;transform:scaleX(1.0163);transform-origin:0 0;">Dati</div><div class="t" style="left:96.92px;top:26.74px;font-size:12px;line-height:12px;font-weight:normal;color:#1a1a1a;transform:scaleX(0.9650);transform-origin:0 0;">Geometria</div><div class="t" style="left:166.41px;top:26.74px;font-size:12px;line-height:12px;font-weight:normal;color:#1a1a1a;transform:scaleX(0.9861);transform-origin:0 0;">Carichi</div><div class="t" style="left:216.48px;top:26.74px;font-size:12px;line-height:12px;font-weight:normal;color:#1a1a1a;transform:scaleX(1.0595);transform-origin:0 0;">Modello</div><div class="t" style="left:275.60px;top:26.74px;font-size:12px;line-height:12px;font-weight:normal;color:#1a1a1a;transform:scaleX(0.9780);transform-origin:0 0;">Analisi</div><div class="t" style="left:324.40px;top:26.74px;font-size:12px;line-height:12px;font-weight:normal;color:#1a1a1a;transform:scaleX(1.0104);transform-origin:0 0;">Armature</div><div class="t" style="left:387.03px;top:26.74px;font-size:12px;line-height:12px;font-weight:normal;color:#1a1a1a;transform:scaleX(1.0117);transform-origin:0 0;">Risultati</div><div class="t" style="left:443.49px;top:26.74px;font-size:12px;line-height:12px;font-weight:normal;color:#1a1a1a;transform:scaleX(0.9520);transform-origin:0 0;">Relazione</div><div class="t" style="left:508.19px;top:26.74px;font-size:12px;line-height:12px;font-weight:normal;color:#1a1a1a;transform:scaleX(0.9342);transform-origin:0 0;">Grafica</div><div class="t" style="left:559.40px;top:26.74px;font-size:12px;line-height:12px;font-weight:normal;color:#1a1a1a;transform:scaleX(1.0206);transform-origin:0 0;">Window</div><div class="t" style="left:616.89px;top:26.74px;font-size:12px;line-height:12px;font-weight:normal;color:#1a1a1a;transform:scaleX(1.0092);transform-origin:0 0;">Strumenti</div><div class="t" style="left:681.99px;top:26.74px;font-size:12px;line-height:12px;font-weight:normal;color:#1a1a1a;transform:scaleX(1.0524);transform-origin:0 0;">Help</div>
<div style="position:absolute;left:1864px;top:26px;width:16px;height:16px;border:1px solid #ddd;box-sizing:border-box;"></div>
<div style="position:absolute;left:1868px;top:35px;width:6px;height:2px;background:#555;"></div>
<div style="position:absolute;left:1883px;top:26px;width:16px;height:16px;border:1px solid #ddd;box-sizing:border-box;"></div>
<svg class="ic" style="left:1885px;top:28px;width:12px;height:12px" viewBox="0 0 12 12"><rect x="2.5" y="5.5" width="6" height="5" fill="none" stroke="#555"/><path d="M4.5 5.5V3.5H10.5V8.5H8.5" fill="none" stroke="#555"/></svg>
<div style="position:absolute;left:1902px;top:26px;width:16px;height:16px;border:1px solid #ddd;box-sizing:border-box;"></div>
<svg class="ic" style="left:1905px;top:29px;width:10px;height:10px" viewBox="0 0 10 10"><path d="M2 2L8 8M8 2L2 8" stroke="#555" stroke-width="1.8"/></svg>
<!-- toolbar rows -->
<div class="tb" style="top:42px;height:36px;"></div>
<div class="tb" style="top:78px;height:35px;"></div>
<div class="tb tb3" style="top:113px;height:35px;"></div>
<div style="position:absolute;left:0;top:42px;width:11px;height:106px;background:#f4f4f4;"></div>
<div style="position:absolute;left:0;top:147px;width:1920px;height:1px;background:#b8b8b8;"></div>
<div style="position:absolute;left:0;top:75px;width:1920px;height:2px;background:#b8b8b8;"></div><div style="position:absolute;left:0;top:77px;width:1920px;height:1px;background:#f4f4f4;"></div>
<div style="position:absolute;left:0;top:112px;width:1920px;height:1px;background:#b4b4b4;"></div><div style="position:absolute;left:0;top:113px;width:1920px;height:1px;background:#f6f6f6;"></div>
<div style="position:absolute;left:4px;top:45px;width:2px;height:29px;background:repeating-linear-gradient(#c8d8c8 0 1px,transparent 1px 3px);"></div>
<div style="position:absolute;left:4px;top:80px;width:2px;height:29px;background:repeating-linear-gradient(#c8d8c8 0 1px,transparent 1px 3px);"></div>
<div style="position:absolute;left:4px;top:115px;width:2px;height:29px;background:repeating-linear-gradient(#c8d8c8 0 1px,transparent 1px 3px);"></div>
<svg class="ic" style="left:21px;top:51px;width:18px;height:20px" viewBox="0 0 18 20"><path d="M2.5 0.5H11.5L15.5 4.5V17.5H2.5Z" fill="#fff" stroke="#444"/><path d="M11.5 0.5V4.5H15.5" fill="#eee" stroke="#444"/><path d="M3.5 17.5H16V5" stroke="#999" fill="none"/></svg>
<svg class="ic" style="left:55px;top:51px;width:20px;height:20px" viewBox="0 0 20 20"><path d="M1 6L10 4L17 8L15 18L3 18Z" fill="#f4e040" stroke="#b09020"/><path d="M3 11L14 9L15 18H3Z" fill="#e8c820"/><path d="M7 1Q13 -1 17 5L14 8L19 8L18 2Z" fill="#30a030" stroke="#106010" stroke-width="0.8"/></svg>
<svg class="ic" style="left:91px;top:52px;width:20px;height:19px" viewBox="0 0 20 19"><defs><linearGradient id="fg" x1="0" y1="0" x2="0" y2="1"><stop offset="0" stop-color="#e8f8ff"/><stop offset="1" stop-color="#8fd0f8"/></linearGradient></defs><rect x="0.5" y="0.5" width="18" height="17" fill="#0a3aa8"/><rect x="1.5" y="1.5" width="16" height="15" fill="#1e6ae0"/><rect x="3.5" y="2" width="12" height="9" fill="url(#fg)"/><rect x="5" y="12" width="9" height="5" fill="#dff"/><rect x="8" y="13" width="3" height="4" fill="#0a3aa8"/></svg>
<svg class="ic" style="left:128px;top:51px;width:20px;height:20px" viewBox="0 0 20 20"><rect x="0.5" y="0.5" width="13" height="13" fill="#1e5ad0" stroke="#0a3aa8"/><rect x="2.5" y="2" width="9" height="6" fill="#bfe8ff"/><rect x="4.5" y="4.5" width="14" height="14" fill="#1e6ae0" stroke="#0a3aa8"/><rect x="6.5" y="6" width="10" height="7" fill="#bfe8ff"/><rect x="8" y="14" width="7" height="4" fill="#dff"/><rect x="10" y="15" width="2" height="3" fill="#0a3aa8"/></svg>
<div style="position:absolute;left:157px;top:46px;width:1px;height:30px;background:#a0a0a0;"></div><div style="position:absolute;left:158px;top:46px;width:1px;height:30px;background:#fafafa;"></div>
<svg class="ic" style="left:168px;top:48px;width:30px;height:26px" viewBox="0 0 30 26"><text x="2" y="11" font-size="12.5" font-weight="bold" fill="#2a6ab8" font-family="Liberation Sans">kg</text><text x="8" y="22.5" font-size="12.5" font-weight="bold" fill="#3cb43c" font-family="Liberation Sans">cm</text></svg>
<svg class="ic" style="left:206px;top:49px;width:26px;height:22px" viewBox="0 0 26 22"><text x="2.5" y="7.5" font-size="7.6" font-weight="bold" fill="#111" font-family="Liberation Mono" textLength="20">NORM</text><path d="M4 19V11Q8 9 12 12Q16 9 20 11V19Q16 17 12 19Q8 17 4 19Z" fill="#fff" stroke="#1a1a50" stroke-width="1.4"/><path d="M12 12V19" stroke="#1a1a50" stroke-width="1.2"/><path d="M4 13L2 20H22L20 13" fill="none" stroke="#1a1a50" stroke-width="1"/></svg>
<div class="box" style="left:238px;top:45px;width:197px;height:30px;border-color:#a0a0a0;"></div>
<div class="t" style="left:245.27px;top:54.81px;font-size:10.5px;line-height:10.5px;font-weight:normal;color:#5a1414;transform:scaleX(0.9871);transform-origin:0 0;">NORME TECNICHE 2008 - Approccio 1</div>
<svg class="ic" style="left:445px;top:51px;width:20px;height:20px" viewBox="0 0 20 20"><circle cx="10" cy="10" r="8" fill="#1f5a1f"/><circle cx="17.20" cy="10.00" r="2.8" fill="#1f5a1f"/><circle cx="15.83" cy="14.23" r="2.8" fill="#1f5a1f"/><circle cx="12.23" cy="16.85" r="2.8" fill="#1f5a1f"/><circle cx="7.78" cy="16.85" r="2.8" fill="#1f5a1f"/><circle cx="4.18" cy="14.23" r="2.8" fill="#1f5a1f"/><circle cx="2.80" cy="10.00" r="2.8" fill="#1f5a1f"/><circle cx="4.17" cy="5.77" r="2.8" fill="#1f5a1f"/><circle cx="7.77" cy="3.15" r="2.8" fill="#1f5a1f"/><circle cx="12.22" cy="3.15" r="2.8" fill="#1f5a1f"/><circle cx="15.82" cy="5.77" r="2.8" fill="#1f5a1f"/><path d="M6 8L9 6M12 13L14 10M7 13L9 14" stroke="#3a8a3a" stroke-width="1.2"/></svg>
<svg class="ic" style="left:478px;top:53px;width:24px;height:17px" viewBox="0 0 24 17"><rect x="0" y="0" width="24" height="1.5" fill="#222"/><rect x="0" y="1.5" width="24" height="5" fill="#f0a030"/><path d="M0 6.5H24V12Q12 11 0 14Z" fill="#f6f050"/><path d="M0 14Q12 11 24 12V13H0Z" fill="#e8e050"/><rect x="0" y="13" width="24" height="3" fill="#2a7a20"/></svg>
<svg class="ic" style="left:517px;top:52px;width:20px;height:17px" viewBox="0 0 20 17"><rect x="0" y="0" width="20" height="17" fill="#1a6a6a"/><path d="M0 4.5H20M0 8.5H20M0 12.5H20M6 0V4.5M14 0V4.5M3 4.5V8.5M11 4.5V8.5M17 4.5V8.5M6 8.5V12.5M14 8.5V12.5M3 12.5V17M11 12.5V17" stroke="#80b8b8" stroke-width="1"/></svg>
<div style="position:absolute;left:547px;top:46px;width:1px;height:30px;background:#a0a0a0;"></div><div style="position:absolute;left:548px;top:46px;width:1px;height:30px;background:#fafafa;"></div>
<svg class="ic" style="left:558px;top:50px;width:24px;height:22px" viewBox="0 0 24 22"><path d="M3 9L21 3M3 14L21 8M2 19L20 13" stroke="#222" stroke-width="2.6" fill="none"/><path d="M8 4L4 21M18 2L14 19" stroke="#333" stroke-width="2.4" fill="none"/><path d="M3 9L21 3M3 14L21 8" stroke="#999" stroke-width="0.8" fill="none"/></svg>
<svg class="ic" style="left:598px;top:52px;width:20px;height:20px" viewBox="0 0 20 20"><rect x="0.5" y="0.5" width="18" height="18" fill="#c8c8c8" stroke="#777"/><rect x="2.5" y="2.5" width="14" height="14" fill="#108010" stroke="#0a400a"/><rect x="6" y="6" width="7" height="7" fill="#30f030"/><path d="M2.5 2.5L6 6M16.5 2.5L13 6M2.5 16.5L6 13M16.5 16.5L13 13" stroke="#0a500a"/></svg>
<svg class="ic" style="left:632px;top:51px;width:20px;height:20px" viewBox="0 0 20 20"><text x="0" y="14" font-size="10" font-weight="bold" fill="#111" font-family="Liberation Sans">h</text><path d="M7.5 4V18" stroke="#555" stroke-width="0.8"/><rect x="9.5" y="1.5" width="9" height="17" rx="4" fill="#e4e4e4" stroke="#888"/><path d="M11.5 3V17" stroke="#fff" stroke-width="1.5"/></svg>
<svg class="ic" style="left:668px;top:50px;width:24px;height:22px" viewBox="0 0 24 22"><rect x="1.5" y="1.5" width="8" height="11" fill="#f8f4ff" stroke="#7a48a8"/><path d="M3 4H8M3 6.5H8M3 9H8" stroke="#7a48a8" stroke-width="0.8"/><path d="M11 5H16M13.5 2.5V7.5" stroke="#111" stroke-width="1.3"/><path d="M19 2V13M16.5 10.5L19 13.5L21.5 10.5" stroke="#208020" stroke-width="1.8" fill="none"/><path d="M2 18H5M3.5 16.5V19.5" stroke="#111" stroke-width="1.3"/><path d="M8 18H21M18 15.5L21 18L18 20.5" stroke="#1a2ac0" stroke-width="2" fill="none"/></svg>
<svg class="ic" style="left:704px;top:50px;width:24px;height:23px" viewBox="0 0 24 23"><rect x="5.5" y="1.5" width="16" height="18" fill="#fff" stroke="#333"/><path d="M5.5 5.5H21.5M5.5 9.5H21.5M5.5 13.5H21.5M9.5 1.5V19.5M13.5 1.5V19.5M17.5 1.5V19.5" stroke="#c8c8d8" stroke-width="0.8"/><rect x="5.5" y="1.5" width="16" height="18" fill="none" stroke="#333"/><text x="-0.5" y="21" font-size="15" font-weight="bold" fill="#1a2ad8" font-family="Liberation Sans">G</text></svg>
<div style="position:absolute;left:735px;top:46px;width:1px;height:30px;background:#a0a0a0;"></div><div style="position:absolute;left:736px;top:46px;width:1px;height:30px;background:#fafafa;"></div>
<svg class="ic" style="left:747px;top:50px;width:23px;height:23px" viewBox="0 0 23 23"><text x="4" y="6.5" font-size="7" font-weight="bold" fill="#a01818" font-family="Liberation Mono">DPZ</text><path d="M5 8H21" stroke="#222" stroke-width="1.2"/><path d="M1 15L3 14L5 21L7 8" stroke="#111" stroke-width="1.2" fill="none"/><text x="6.5" y="14" font-size="8" fill="#d02020" font-family="Liberation Sans">2</text><text x="6" y="21" font-size="7.5" fill="#3030b0" font-family="Liberation Sans">7</text><path d="M12 9.5H21L16.5 15.5L21 21H12L16.5 15.5Z" fill="#f2ea90" stroke="#111" stroke-width="1.2"/></svg>
<svg class="ic" style="left:783px;top:50px;width:23px;height:23px" viewBox="0 0 23 23"><path d="M1 15L3 14L5 21L7 2H22" stroke="#111" stroke-width="1.3" fill="none"/><text x="6.5" y="14" font-size="8" fill="#d02020" font-family="Liberation Sans">2</text><text x="6" y="21" font-size="7.5" fill="#3030b0" font-family="Liberation Sans">7</text><path d="M12 9.5H21L16.5 15.5L21 21H12L16.5 15.5Z" fill="#f2ea90" stroke="#111" stroke-width="1.2"/></svg>
<svg class="ic" style="left:819px;top:50px;width:23px;height:23px" viewBox="0 0 23 23"><path d="M1 15L3 14L5 21L7 2H22" stroke="#111" stroke-width="1.3" fill="none"/><text x="6.5" y="14" font-size="8" fill="#d02020" font-family="Liberation Sans">2</text><text x="6" y="21" font-size="7.5" fill="#3030b0" font-family="Liberation Sans">7</text><path d="M12 9.5H21L16.5 15.5L21 21H12L16.5 15.5Z" fill="#f2ea90" stroke="#111" stroke-width="1.2"/><path d="M12 11L21 20M21 11L12 20" stroke="#d01010" stroke-width="3"/></svg>
<div style="position:absolute;left:851px;top:46px;width:1px;height:30px;background:#a0a0a0;"></div><div style="position:absolute;left:852px;top:46px;width:1px;height:30px;background:#fafafa;"></div>
<svg class="ic" style="left:864px;top:49px;width:24px;height:25px" viewBox="0 0 24 25"><path d="M5 2H3V14M9 2H11M14 2H16V12" stroke="#2a2aa0" stroke-width="1.2" fill="none"/><path d="M3 18H13M3 21H13M3 18V21" stroke="#2a2aa0" stroke-width="1.2" fill="none"/><path d="M13 23V11H18Q22 11 22 14.5Q22 18 18 18H13" stroke="#111" stroke-width="3.2" fill="none"/></svg>
<div style="position:absolute;left:895px;top:46px;width:1px;height:30px;background:#a0a0a0;"></div><div style="position:absolute;left:896px;top:46px;width:1px;height:30px;background:#fafafa;"></div>
<svg class="ic" style="left:908px;top:50px;width:22px;height:23px" viewBox="0 0 22 23"><path d="M6.5 2.5H16L20.5 7V21.5H6.5Z" fill="#fff" stroke="#333"/><path d="M16 2.5V7H20.5" fill="none" stroke="#333"/><path d="M10 11H18M10 14H18M10 17H18" stroke="#888"/><rect x="1" y="4" width="10" height="9" fill="#20409a"/><rect x="2" y="5" width="8" height="7" fill="#fff"/><text x="2.2" y="11.5" font-size="7.5" font-weight="bold" fill="#20409a" font-family="Liberation Sans">W</text></svg>
<svg class="ic" style="left:17px;top:84px;width:24px;height:24px" viewBox="0 0 24 24"><rect x="0.5" y="0.5" width="23" height="23" fill="#d8c4bc" stroke="#777"/><path d="M2.5 3.5H5.5M4.0 2.0V5.0" stroke="#222" stroke-width="1.1"/><path d="M2.5 8.8H5.5M4.0 7.3V10.3" stroke="#222" stroke-width="1.1"/><path d="M2.5 14.1H5.5M4.0 12.6V15.6" stroke="#222" stroke-width="1.1"/><path d="M2.5 19.4H5.5M4.0 17.9V20.9" stroke="#222" stroke-width="1.1"/><path d="M7.8 3.5H10.8M9.3 2.0V5.0" stroke="#222" stroke-width="1.1"/><path d="M7.8 8.8H10.8M9.3 7.3V10.3" stroke="#222" stroke-width="1.1"/><path d="M7.8 14.1H10.8M9.3 12.6V15.6" stroke="#222" stroke-width="1.1"/><path d="M7.8 19.4H10.8M9.3 17.9V20.9" stroke="#222" stroke-width="1.1"/><path d="M13.1 3.5H16.1M14.6 2.0V5.0" stroke="#222" stroke-width="1.1"/><path d="M13.1 8.8H16.1M14.6 7.3V10.3" stroke="#222" stroke-width="1.1"/><path d="M13.1 14.1H16.1M14.6 12.6V15.6" stroke="#222" stroke-width="1.1"/><path d="M13.1 19.4H16.1M14.6 17.9V20.9" stroke="#222" stroke-width="1.1"/><path d="M18.4 3.5H21.4M19.9 2.0V5.0" stroke="#222" stroke-width="1.1"/><path d="M18.4 8.8H21.4M19.9 7.3V10.3" stroke="#222" stroke-width="1.1"/><path d="M18.4 14.1H21.4M19.9 12.6V15.6" stroke="#222" stroke-width="1.1"/><path d="M18.4 19.4H21.4M19.9 17.9V20.9" stroke="#222" stroke-width="1.1"/></svg>
<div class="t" style="left:47.73px;top:91.07px;font-size:11.5px;line-height:11.5px;font-weight:normal;color:#1a1a1a;transform:scaleX(0.9867);transform-origin:0 0;">Input grafico</div>
<svg class="ic" style="left:125px;top:83px;width:25px;height:25px" viewBox="0 0 25 25"><path d="M10 2Q12 3 10 8Q8 11 3 10" stroke="#c01818" stroke-width="2.2" fill="none"/><path d="M9 1L12 2.5L9 5" fill="#c01818"/><path d="M20 1V10" stroke="#101a80" stroke-width="2"/><path d="M17 8L20 12L23 8Z" fill="#101a80"/><rect x="2.5" y="13.5" width="20" height="4" fill="#e8f8e8" stroke="#208020" stroke-width="1.5"/><path d="M6 17V22M11 17V22M16 17V22M21 17V22M2 22.5H23" stroke="#208020" stroke-width="1.6"/></svg>
<div class="t" style="left:155.24px;top:91.07px;font-size:11.5px;line-height:11.5px;font-weight:normal;color:#1a1a1a;transform:scaleX(0.9749);transform-origin:0 0;">Input carichi</div>
<svg class="ic" style="left:232px;top:84px;width:24px;height:24px" viewBox="0 0 24 24"><rect x="0" y="0" width="24" height="24" fill="#f0e0e0"/><rect x="0.5" y="0.5" width="2.2" height="2.2" fill="#8a1818"/><rect x="0.5" y="3.5" width="2.2" height="2.2" fill="#8a1818"/><rect x="0.5" y="6.5" width="2.2" height="2.2" fill="#8a1818"/><rect x="0.5" y="9.5" width="2.2" height="2.2" fill="#8a1818"/><rect x="0.5" y="12.5" width="2.2" height="2.2" fill="#8a1818"/><rect x="0.5" y="15.5" width="2.2" height="2.2" fill="#8a1818"/><rect x="0.5" y="18.5" width="2.2" height="2.2" fill="#8a1818"/><rect x="0.5" y="21.5" width="2.2" height="2.2" fill="#8a1818"/><rect x="3.5" y="0.5" width="2.2" height="2.2" fill="#8a1818"/><rect x="3.5" y="3.5" width="2.2" height="2.2" fill="#8a1818"/><rect x="3.5" y="6.5" width="2.2" height="2.2" fill="#8a1818"/><rect x="3.5" y="9.5" width="2.2" height="2.2" fill="#8a1818"/><rect x="3.5" y="12.5" width="2.2" height="2.2" fill="#8a1818"/><rect x="3.5" y="15.5" width="2.2" height="2.2" fill="#8a1818"/><rect x="3.5" y="18.5" width="2.2" height="2.2" fill="#8a1818"/><rect x="3.5" y="21.5" width="2.2" height="2.2" fill="#8a1818"/><rect x="6.5" y="0.5" width="2.2" height="2.2" fill="#8a1818"/><rect x="6.5" y="3.5" width="2.2" height="2.2" fill="#8a1818"/><rect x="6.5" y="6.5" width="2.2" height="2.2" fill="#8a1818"/><rect x="6.5" y="9.5" width="2.2" height="2.2" fill="#8a1818"/><rect x="6.5" y="12.5" width="2.2" height="2.2" fill="#8a1818"/><rect x="6.5" y="15.5" width="2.2" height="2.2" fill="#8a1818"/><rect x="6.5" y="18.5" width="2.2" height="2.2" fill="#8a1818"/><rect x="6.5" y="21.5" width="2.2" height="2.2" fill="#8a1818"/><rect x="9.5" y="0.5" width="2.2" height="2.2" fill="#8a1818"/><rect x="9.5" y="3.5" width="2.2" height="2.2" fill="#8a1818"/><rect x="9.5" y="6.5" width="2.2" height="2.2" fill="#8a1818"/><rect x="9.5" y="9.5" width="2.2" height="2.2" fill="#8a1818"/><rect x="9.5" y="12.5" width="2.2" height="2.2" fill="#8a1818"/><rect x="9.5" y="15.5" width="2.2" height="2.2" fill="#8a1818"/><rect x="9.5" y="18.5" width="2.2" height="2.2" fill="#8a1818"/><rect x="9.5" y="21.5" width="2.2" height="2.2" fill="#8a1818"/><rect x="12.5" y="0.5" width="2.2" height="2.2" fill="#8a1818"/><rect x="12.5" y="3.5" width="2.2" height="2.2" fill="#8a1818"/><rect x="12.5" y="6.5" width="2.2" height="2.2" fill="#8a1818"/><rect x="12.5" y="9.5" width="2.2" height="2.2" fill="#8a1818"/><rect x="12.5" y="12.5" width="2.2" height="2.2" fill="#8a1818"/><rect x="12.5" y="15.5" width="2.2" height="2.2" fill="#8a1818"/><rect x="12.5" y="18.5" width="2.2" height="2.2" fill="#8a1818"/><rect x="12.5" y="21.5" width="2.2" height="2.2" fill="#8a1818"/><rect x="15.5" y="0.5" width="2.2" height="2.2" fill="#8a1818"/><rect x="15.5" y="3.5" width="2.2" height="2.2" fill="#8a1818"/><rect x="15.5" y="6.5" width="2.2" height="2.2" fill="#8a1818"/><rect x="15.5" y="9.5" width="2.2" height="2.2" fill="#8a1818"/><rect x="15.5" y="12.5" width="2.2" height="2.2" fill="#8a1818"/><rect x="15.5" y="15.5" width="2.2" height="2.2" fill="#8a1818"/><rect x="15.5" y="18.5" width="2.2" height="2.2" fill="#8a1818"/><rect x="15.5" y="21.5" width="2.2" height="2.2" fill="#8a1818"/><rect x="18.5" y="0.5" width="2.2" height="2.2" fill="#8a1818"/><rect x="18.5" y="3.5" width="2.2" height="2.2" fill="#8a1818"/><rect x="18.5" y="6.5" width="2.2" height="2.2" fill="#8a1818"/><rect x="18.5" y="9.5" width="2.2" height="2.2" fill="#8a1818"/><rect x="18.5" y="12.5" width="2.2" height="2.2" fill="#8a1818"/><rect x="18.5" y="15.5" width="2.2" height="2.2" fill="#8a1818"/><rect x="18.5" y="18.5" width="2.2" height="2.2" fill="#8a1818"/><rect x="18.5" y="21.5" width="2.2" height="2.2" fill="#8a1818"/><rect x="21.5" y="0.5" width="2.2" height="2.2" fill="#8a1818"/><rect x="21.5" y="3.5" width="2.2" height="2.2" fill="#8a1818"/><rect x="21.5" y="6.5" width="2.2" height="2.2" fill="#8a1818"/><rect x="21.5" y="9.5" width="2.2" height="2.2" fill="#8a1818"/><rect x="21.5" y="12.5" width="2.2" height="2.2" fill="#8a1818"/><rect x="21.5" y="15.5" width="2.2" height="2.2" fill="#8a1818"/><rect x="21.5" y="18.5" width="2.2" height="2.2" fill="#8a1818"/><rect x="21.5" y="21.5" width="2.2" height="2.2" fill="#8a1818"/></svg>
<div class="t" style="left:264.08px;top:91.07px;font-size:11.5px;line-height:11.5px;font-weight:normal;color:#1a1a1a;transform:scaleX(0.9085);transform-origin:0 0;">Grafica modello</div>
<div style="position:absolute;left:346px;top:79px;width:90px;height:32px;background:#b8cbec;border:1px solid #7f9fd4;"></div>
<svg class="ic" style="left:355px;top:85px;width:20px;height:22px" viewBox="0 0 20 22"><path d="M1 20L9 3L18 20Z" fill="#38c858"/><path d="M4 19L9 11L14 19Z" fill="#f0e040"/><path d="M5 16L15 4" stroke="#d02020" stroke-width="3"/><path d="M14 5L18 1" stroke="#2040c0" stroke-width="2"/><path d="M9 3L1 20" stroke="#f08080" stroke-width="1"/></svg>
<div class="t" style="left:380.07px;top:91.07px;font-size:11.5px;line-height:11.5px;font-weight:normal;color:#1a1a1a;transform:scaleX(0.9133);transform-origin:0 0;">Grafica</div>
<div style="position:absolute;left:11px;top:113px;width:36px;height:34px;background:#c6d5ee;border:1px solid #a8bde0;box-sizing:border-box;"></div>
<svg class="ic" style="left:17px;top:120px;width:24px;height:24px" viewBox="0 0 24 24"><rect x="4.5" y="1.5" width="18" height="18" fill="#f4f4f8" stroke="#111" stroke-width="1.6"/><path d="M8.1 1.5V19.5M4.5 5.1H22.5" stroke="#b0b0c0" stroke-width="0.7"/><path d="M11.7 1.5V19.5M4.5 8.7H22.5" stroke="#b0b0c0" stroke-width="0.7"/><path d="M15.3 1.5V19.5M4.5 12.3H22.5" stroke="#b0b0c0" stroke-width="0.7"/><path d="M18.9 1.5V19.5M4.5 15.9H22.5" stroke="#b0b0c0" stroke-width="0.7"/><path d="M1.5 1V20M4.5 22.5H22.5M4.5 21.5V23.5M22.5 21.5V23.5" stroke="#777" stroke-width="0.8"/></svg>
<svg class="ic" style="left:57px;top:125px;width:17px;height:11px" viewBox="0 0 17 11"><path d="M0 0.5H4L6 7L8 2H10L12 7L14 0.5H17L13.5 10H10.5L9 5.5L7.5 10H4.5Z" fill="#101060"/></svg>
<svg class="ic" style="left:92px;top:121px;width:21px;height:21px" viewBox="0 0 21 21"><path d="M1 1H20V20H8V16H1Z" fill="#38e0c0"/><path d="M1 1H20V11Q14 8 10 10Q5 12 1 9Z" fill="#60f040"/><path d="M8 16V20H20V13Q14 12 8 16Z" fill="#40d880"/><path d="M1 1H20V20H8V16H1Z" fill="none" stroke="#30a030" stroke-width="0.8"/><text x="6" y="10" font-size="9" font-weight="bold" fill="#101050" {FL}>M</text><circle cx="10" cy="14" r="2.8" fill="#f0f020"/></svg>
<svg class="ic" style="left:130px;top:122px;width:20px;height:20px" viewBox="0 0 20 20"><path d="M1.5 1.5H17.5V5.5H3.5V8.5H17.5V10.5M1.5 10.5V17.5H17.5V13.5H3.5" stroke="#a8a8a8" stroke-width="1.2" fill="none"/></svg>
<div style="position:absolute;left:161px;top:116px;width:1px;height:30px;background:#a0a0a0;"></div><div style="position:absolute;left:162px;top:116px;width:1px;height:30px;background:#fafafa;"></div>
<svg class="ic" style="left:225px;top:116px;width:27px;height:25px" viewBox="0 0 27 25"><text x="0" y="20" font-size="23" font-weight="bold" fill="#a8a8a8" font-family="Liberation Serif">?</text><rect x="15.5" y="14.5" width="10" height="9" fill="#fff" stroke="#a0a0a0"/><path d="M15.5 17.5H25.5M15.5 20.5H25.5M19 14.5V23.5M22 14.5V23.5" stroke="#a0a0a0" stroke-width="0.8"/></svg>
<!-- bottom toolbar -->
<div style="position:absolute;left:0;top:980px;width:1920px;height:1px;background:#a0a0a0;"></div>
<div class="tb tb3" style="top:981px;height:35px;"></div><div style="position:absolute;left:0;top:1016px;width:1920px;height:1px;background:#fafafa;"></div>
<div style="position:absolute;left:0;top:981px;width:11px;height:36px;background:#f4f4f4;"></div>
<svg class="ic" style="left:18px;top:987px;width:22px;height:22px" viewBox="0 0 22 22"><circle cx="13" cy="8" r="6.5" fill="#fff" stroke="#222" stroke-width="1.5"/><path d="M13 4V12M9 8H17" stroke="#222" stroke-width="1.6"/><path d="M8 13L2 20" stroke="#d09030" stroke-width="4" stroke-linecap="round"/></svg>
<svg class="ic" style="left:47px;top:997px;width:8px;height:5px" viewBox="0 0 8 5"><path d="M0 0H8L4 4Z" fill="#111"/></svg>
<svg class="ic" style="left:63px;top:988px;width:22px;height:22px" viewBox="0 0 22 22"><path d="M1 10L11 1V6H20V15H11V20Z" fill="#1a78d0"/><path d="M11 6H20V10H11Z" fill="#58a8f0"/></svg>
<svg class="ic" style="left:94px;top:997px;width:8px;height:5px" viewBox="0 0 8 5"><path d="M0 0H8L4 4Z" fill="#111"/></svg>
<svg class="ic" style="left:111px;top:988px;width:20px;height:22px" viewBox="0 0 20 22"><path d="M5 20Q2 14 3 9Q3 7 5 8L6 11V3Q6 1 8 2V9V2Q9 0 11 1V9V2Q12 1 14 2V10V4Q15 3 17 4V14Q16 19 13 21Z" fill="#fff" stroke="#666" stroke-width="1"/></svg>
<div style="position:absolute;left:137px;top:983px;width:31px;height:31px;background:#bcd0ee;border:1px solid #8aa8d8;"></div>
<svg class="ic" style="left:142px;top:988px;width:22px;height:22px" viewBox="0 0 22 22"><ellipse cx="11" cy="11" rx="9" ry="7" fill="none" stroke="#223" stroke-width="1.5"/><path d="M6 13L11 7L16 10L11 15Z" fill="#d02020"/></svg>
<svg class="ic" style="left:174px;top:986px;width:24px;height:26px" viewBox="0 0 24 26"><path d="M9 4V18H21M9 18L2 24" stroke="#222" stroke-width="1.4" fill="none"/><text x="1" y="8" font-size="8" fill="#2040a0" font-family="Liberation Sans">Z</text><text x="16" y="14" font-size="8" fill="#2040a0" font-family="Liberation Sans">Y</text><text x="10" y="25" font-size="8" fill="#2040a0" font-family="Liberation Sans">X</text></svg>
<svg class="ic" style="left:205px;top:997px;width:8px;height:5px" viewBox="0 0 8 5"><path d="M0 0H8L4 4Z" fill="#111"/></svg>
<svg class="ic" style="left:223px;top:990px;width:18px;height:18px" viewBox="0 0 18 18"><path d="M0 3L3 0H17V14L14 17H0Z" fill="#e01010"/><path d="M14 3H0L3 0H17Z" fill="#ff4040"/></svg>
<svg class="ic" style="left:252px;top:997px;width:8px;height:5px" viewBox="0 0 8 5"><path d="M0 0H8L4 4Z" fill="#111"/></svg>
<div class="box" style="left:264px;top:983px;width:182px;height:29px;border-color:#b0b0b0;"></div>
<div class="t" style="left:309.56px;top:992.77px;font-size:11.5px;line-height:11.5px;font-weight:normal;color:#1a1a1a;transform:scaleX(0.9522);transform-origin:0 0;">38,56; 28,50; -0,02</div>
<div style="position:absolute;left:446px;top:984px;width:1px;height:30px;background:#a0a0a0;"></div><div style="position:absolute;left:447px;top:984px;width:1px;height:30px;background:#fafafa;"></div>
<svg class="ic" style="left:456px;top:988px;width:18px;height:22px" viewBox="0 0 18 22"><path d="M1 1H10L14 5V20H1Z" fill="#fff" stroke="#999"/><circle cx="11" cy="16" r="5" fill="#e0d020" stroke="#333"/></svg>
<svg class="ic" style="left:486px;top:988px;width:20px;height:20px" viewBox="0 0 20 20"><rect x="1" y="1" width="12" height="9" fill="#a8d8c0" stroke="#8cc"/><rect x="6" y="6" width="12" height="12" fill="#f0a030"/></svg>
<svg class="ic" style="left:520px;top:990px;width:18px;height:18px" viewBox="0 0 18 18"><rect x="1" y="0" width="15" height="2.5" fill="#333"/><rect x="1" y="6" width="4" height="8" fill="#333"/><rect x="8" y="6" width="7" height="8" fill="#f0e040" stroke="#333" stroke-width="1.5"/></svg>
<div style="position:absolute;left:546px;top:984px;width:1px;height:30px;background:#a0a0a0;"></div><div style="position:absolute;left:547px;top:984px;width:1px;height:30px;background:#fafafa;"></div>
<svg class="ic" style="left:579px;top:991px;width:18px;height:16px" viewBox="0 0 18 16"><path d="M0 7L7 1V5H16V10H7V14Z" fill="#aaa"/></svg>
<div class="box" style="left:605px;top:983px;width:182px;height:29px;border-color:#b0b0b0;"></div>
<div class="t" style="left:633.97px;top:992.77px;font-size:11.5px;line-height:11.5px;font-weight:normal;color:#1a1a1a;transform:scaleX(0.9244);transform-origin:0 0;">Comb. 1 / 120 - A1-M1-R1</div>
<svg class="ic" style="left:796px;top:991px;width:18px;height:16px" viewBox="0 0 18 16"><path d="M18 7L11 1V5H2V10H11V14Z" fill="#aaa"/></svg>
<svg class="ic" style="left:827px;top:988px;width:20px;height:20px" viewBox="0 0 20 20"><circle cx="10" cy="10" r="9" fill="#2a7ae0"/><circle cx="10" cy="10" r="9" fill="none" stroke="#1050b0"/><text x="5.5" y="15" font-size="13" font-weight="bold" fill="#fff" font-family="Liberation Sans">?</text></svg>
<!-- status bar -->
<div style="position:absolute;left:0;top:1017px;width:1920px;height:23px;background:linear-gradient(#f0f0f0,#eef2f2 50%,#f2eef0);border-top:1px solid #a8a8a8;box-sizing:border-box;"></div>
<div class="t" style="left:13.75px;top:1022.34px;font-size:12px;line-height:12px;font-weight:normal;color:#1a1a1a;transform:scaleX(0.9185);transform-origin:0 0;">Aztec Informatica s.r.l. * Corso Umberto I, 43 - 87050 Casole Bruzio (CS)&nbsp; -&nbsp; www.aztec.it *&nbsp; aztec@aztec. it</div>
<div style="position:absolute;left:1379px;top:1018px;width:1px;height:22px;background:#bbb;"></div>
<div style="position:absolute;left:1540px;top:1018px;width:1px;height:22px;background:#bbb;"></div>
<div class="t" style="left:1426.30px;top:1021.84px;font-size:12px;line-height:12px;font-weight:bold;color:#7a1818;transform:scaleX(0.9661);transform-origin:0 0;">Fondazione</div>
<!-- window border -->
<div style="position:absolute;left:0;top:0;width:1920px;height:1040px;box-sizing:border-box;border:1px solid #9a2433;border-bottom-width:2px;pointer-events:none;"></div>
</body></html>
